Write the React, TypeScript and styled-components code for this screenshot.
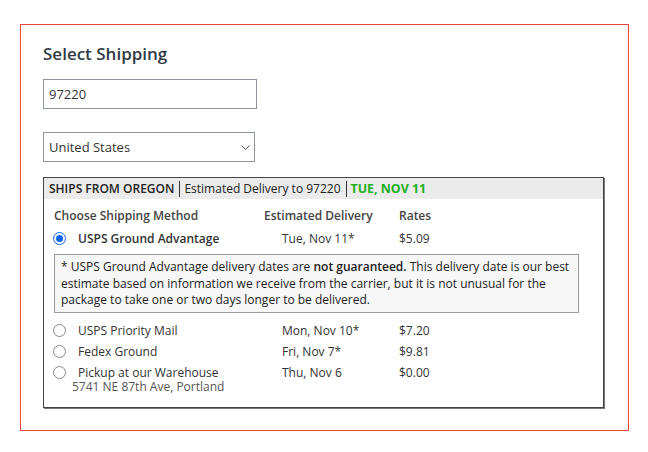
import React from 'react';
import styled, {createGlobalStyle} from 'styled-components';

const Global = createGlobalStyle`
  body {
    margin: 0;
    background: #fff;
    font-family: "Open Sans", "Noto Sans", sans-serif;
    color: #333;
  }
`;

const Card = styled.div`
  box-sizing: border-box;
  width: 609px;
  height: 407px;
  margin: 24px 0 0 20px;
  border: 1px solid #e9473e;
  padding: 15px 0 0 22px;
  display: flex;
  flex-direction: column;
  align-items: flex-start;
`;

const Title = styled.h2`
  margin: 0;
  font-size: 17px;
  line-height: 28px;
  font-weight: 600;
  color: #2f3a44;
`;

const Field = styled.div<{ $width: number; $top: number }>`
  box-sizing: border-box;
  width: ${p => p.$width}px;
  height: 30px;
  margin-top: ${p => p.$top}px;
  border: 1px solid #8e949c;
  padding: 0 4px 0 5px;
  display: flex;
  align-items: center;
  justify-content: space-between;
  font-size: 13px;
  color: #333;
`;

const Shipping = styled.div`
  box-sizing: border-box;
  width: 561px;
  height: 231px;
  margin-top: 15px;
  border: 1px solid #444;
  box-shadow: 1px 1px 0 #777;
`;

const Banner = styled.div`
  height: 21px;
  background: #ebebeb;
  display: flex;
  align-items: center;
  padding-left: 5px;
  font-size: 12px;
  color: #222;
`;

const BannerPart = styled.span<{ $bold?: boolean; $green?: boolean; $sep?: boolean }>`
  font-weight: ${p => (p.$bold ? 600 : 400)};
  color: ${p => (p.$green ? '#1daf1c' : '#222')};
  ${p => p.$green && 'font-weight: 700; font-size: 12.4px;'}
  padding: 0 5px 0 4px;
  line-height: 16px;
  border-left: ${p => (p.$sep ? '1.5px solid #333' : 'none')};
  &:first-child { padding-left: 0; }
`;

const Body = styled.div`
  padding: 4px 24px 0 10px;
`;

const Row = styled.div<{ $head?: boolean }>`
  display: grid;
  grid-template-columns: 210px 135px 1fr;
  align-items: center;
  height: ${p => (p.$head ? 25 : 21)}px;
  font-size: 12px;
  font-weight: ${p => (p.$head ? 600 : 400)};
  color: ${p => (p.$head ? '#444' : '#333')};
`;

const Method = styled.div`
  display: flex;
  align-items: center;
  gap: 12px;
`;

const MethodName = styled.span<{ $strong?: boolean }>`
  font-weight: ${p => (p.$strong ? 600 : 400)};
  color: #333;
`;

const DateCell = styled.span<{ $indent?: boolean }>`
  padding-left: ${p => (p.$indent ? 18 : 0)}px;
`;

const Radio = styled.span<{ $on?: boolean }>`
  box-sizing: border-box;
  width: 13px;
  height: 13px;
  margin-left: -1px;
  border-radius: 50%;
  border: ${p => (p.$on ? '1.5px solid #1164f2' : '1px solid #8a8a8a')};
  display: flex;
  align-items: center;
  justify-content: center;
  flex-shrink: 0;
  &::after {
    content: '';
    display: ${p => (p.$on ? 'block' : 'none')};
    width: 7px;
    height: 7px;
    border-radius: 50%;
    background: #1164f2;
  }
`;

const Note = styled.div`
  box-sizing: border-box;
  width: 525px;
  margin: 5px 0 7px 0;
  padding: 4px 8px 3px 6px;
  background: #f7f7f7;
  border: 1px solid #9a9a9a;
  font-size: 12px;
  line-height: 16.7px;
  color: #222;
  b { font-weight: 600; }
`;

const Address = styled.div`
  padding-left: 18px;
  margin-top: -2px;
  font-size: 12px;
  line-height: 12px;
  color: #555;
`;

const Chevron = () => (
  <svg width="9" height="5" viewBox="0 0 9 5" fill="none">
    <path d="M0.5 0.5l4 4 4-4" stroke="#555" strokeWidth="1" />
  </svg>
);

const others = [
  {name: 'USPS Priority Mail', date: 'Mon, Nov 10*', rate: '$7.20'},
  {name: 'Fedex Ground', date: 'Fri, Nov 7*', rate: '$9.81'},
  {name: 'Pickup at our Warehouse', date: 'Thu, Nov 6', rate: '$0.00'},
];

export default function App() {
  return (
    <>
      <Global/>
      <Card>
        <Title>Select Shipping</Title>
        <Field $width={214} $top={11}>97220</Field>
        <Field $width={212} $top={23}>
          <span>United States</span>
          <Chevron/>
        </Field>
        <Shipping>
          <Banner>
            <BannerPart $bold>SHIPS FROM OREGON</BannerPart>
            <BannerPart $sep>Estimated Delivery to 97220</BannerPart>
            <BannerPart $sep $green>TUE, NOV 11</BannerPart>
          </Banner>
          <Body>
            <Row $head>
              <span>Choose Shipping Method</span>
              <span>Estimated Delivery</span>
              <span>Rates</span>
            </Row>
            <Row>
              <Method>
                <Radio $on/>
                <MethodName $strong>USPS Ground Advantage</MethodName>
              </Method>
              <DateCell $indent>Tue, Nov 11*</DateCell>
              <span>$5.09</span>
            </Row>
            <Note>
              * USPS Ground Advantage delivery dates are <b>not guaranteed.</b> This delivery date is our best
              estimate based on information we receive from the carrier, but it is not unusual for the
              package to take one or two days longer to be delivered.
            </Note>
            {others.map(item => (
              <Row key={item.name}>
                <Method>
                  <Radio/>
                  <MethodName>{item.name}</MethodName>
                </Method>
                <DateCell $indent>{item.date}</DateCell>
                <span>{item.rate}</span>
              </Row>
            ))}
            <Address>5741 NE 87th Ave, Portland</Address>
          </Body>
        </Shipping>
      </Card>
    </>
  );
}
